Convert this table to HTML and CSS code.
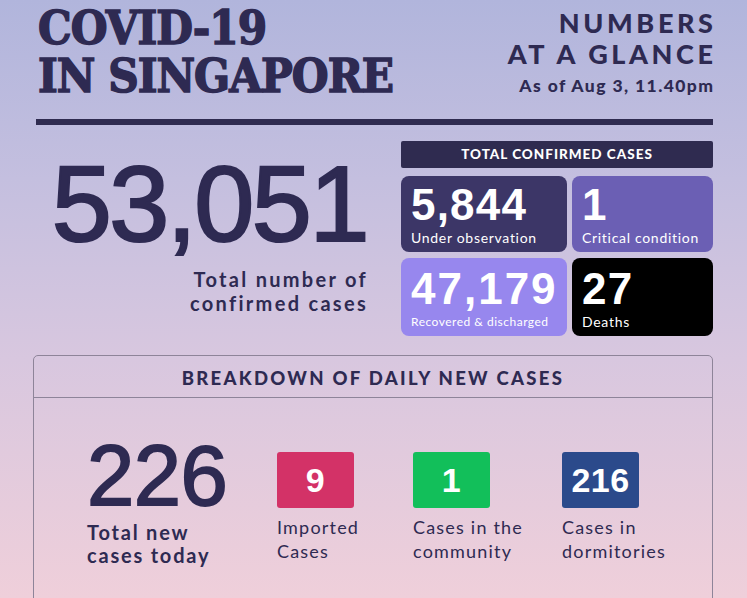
FILE: index.html
```html
<!DOCTYPE html>
<html lang="en">
<head>
<meta charset="utf-8">
<title>COVID-19 in Singapore</title>
<link rel="stylesheet" href="styles.css">
</head>
<body>
<div class="page">
  <header class="top">
    <h1 class="title">COVID-19<br>IN SINGAPORE</h1>
    <div class="glance">
      <div class="glance-title">NUMBERS<br>AT A GLANCE</div>
      <div class="asof">As of Aug 3, 11.40pm</div>
    </div>
  </header>
  <div class="rule"></div>
  <section class="totals">
    <div class="total-left">
      <div class="big">53,051</div>
      <div class="big-cap">Total number of<br>confirmed cases</div>
    </div>
    <div class="panel">
      <div class="panel-head">TOTAL CONFIRMED CASES</div>
      <div class="cards">
        <div class="card c1"><div class="num">5,844</div><div class="lbl">Under observation</div></div>
        <div class="card c2"><div class="num">1</div><div class="lbl">Critical condition</div></div>
        <div class="card c3"><div class="num">47,179</div><div class="lbl small">Recovered &amp; discharged</div></div>
        <div class="card c4"><div class="num">27</div><div class="lbl">Deaths</div></div>
      </div>
    </div>
  </section>
  <section class="breakdown">
    <div class="bd-head">BREAKDOWN OF DAILY NEW CASES</div>
    <div class="bd-body">
      <div class="bd-total">
        <div class="bd-num">226</div>
        <div class="bd-cap">Total new<br>cases today</div>
      </div>
      <div class="bd-item">
        <div class="chip pink">9</div>
        <div class="chip-lbl">Imported<br>Cases</div>
      </div>
      <div class="bd-item">
        <div class="chip green">1</div>
        <div class="chip-lbl">Cases in the<br>community</div>
      </div>
      <div class="bd-item">
        <div class="chip blue">216</div>
        <div class="chip-lbl">Cases in<br>dormitories</div>
      </div>
    </div>
  </section>
</div>
</body>
</html>
```
FILE: styles.css
```css
html, body {
  margin: 0;
  padding: 0;
}
body {
  width: 747px;
  height: 598px;
  overflow: hidden;
  background: linear-gradient(180deg, #b1b5dc 0%, #c4bfdf 30%, #d8c7df 60%, #efcfda 100%);
  color: #2e2a52;
  font-family: Lato, "Noto Sans", sans-serif;
}
.page {
  padding: 0 34px 0 33px;
}
.top {
  display: flex;
  justify-content: space-between;
  align-items: flex-start;
}
.title {
  margin: 0 0 0 5px;
  padding-top: 4px;
  font-family: "DejaVu Serif Condensed", "DejaVu Serif", "Liberation Serif", serif;
  font-stretch: condensed;
  font-weight: 700;
  font-size: 47px;
  line-height: 48px;
  letter-spacing: -1px;
  color: #2e2a52;
  -webkit-text-stroke: 1.4px #2e2a52;
}
.glance {
  text-align: right;
  padding-top: 7px;
}
.glance-title {
  font-weight: 900;
  font-size: 27px;
  line-height: 31px;
  letter-spacing: 3.6px;
  margin-right: -3.6px;
}
.asof {
  margin-top: 7px;
  font-weight: 900;
  font-size: 17.5px;
  line-height: 20px;
  letter-spacing: 1.4px;
  margin-right: -1.4px;
}
.rule {
  height: 6px;
  margin: 19px 0 0 3px;
  background: #2f2b50;
}
.totals {
  display: flex;
  gap: 34px;
  margin-top: 16px;
}
.total-left {
  width: 334px;
  text-align: right;
  padding-top: 9px;
}
.big {
  font-family: "Liberation Sans", Arial, sans-serif;
  font-size: 108px;
  line-height: 108px;
  letter-spacing: -2.5px;
  margin-right: 0;
  color: #2e2a52;
  -webkit-text-stroke: 2.2px #2e2a52;
}
.big-cap {
  margin-top: 9px;
  font-weight: 700;
  font-size: 20px;
  line-height: 24px;
  letter-spacing: 2.3px;
  margin-right: -1px;
}
.panel {
  width: 312px;
}
.panel-head {
  height: 27px;
  line-height: 27px;
  background: #2f2b50;
  border-radius: 2px;
  color: #fff;
  text-align: center;
  font-weight: 900;
  font-size: 13.5px;
  letter-spacing: 1px;
}
.cards {
  display: grid;
  grid-template-columns: 166px 1fr;
  grid-template-rows: 76px 78px;
  gap: 6px 5px;
  margin-top: 8px;
}
.card {
  border-radius: 8px;
  padding: 7px 10px 0;
  color: #fff;
}
.c1 { background: #3c3667; }
.c2 { background: #6b5fb4; }
.c3 { background: #9787ee; padding-top: 9px; }
.c4 { background: #000; padding-top: 9px; }
.num {
  font-family: "Liberation Sans", Arial, sans-serif;
  font-weight: 700;
  font-size: 44px;
  line-height: 44px;
  letter-spacing: 1.2px;
}
.c3 .num {
  letter-spacing: 2px;
}
.lbl {
  margin-top: 3px;
  font-size: 14px;
  line-height: 16px;
  letter-spacing: 0.7px;
}
.lbl.small {
  font-size: 12px;
  letter-spacing: 0.5px;
}
.breakdown {
  margin-top: 19px;
  border: 1px solid #8e8499;
  border-radius: 5px;
  height: 300px;
}
.bd-head {
  height: 41px;
  line-height: 44px;
  border-bottom: 1px solid #8e8499;
  text-align: center;
  font-weight: 900;
  font-size: 18.5px;
  letter-spacing: 2.3px;
}
.bd-body {
  display: grid;
  grid-template-columns: 190px 136px 149px auto;
  padding: 35px 0 0 53px;
  align-items: start;
}
.bd-num {
  font-family: "Liberation Sans", Arial, sans-serif;
  font-size: 85px;
  line-height: 85px;
  letter-spacing: -0.5px;
  color: #2e2a52;
  -webkit-text-stroke: 1.8px #2e2a52;
}
.bd-cap {
  margin-top: 3px;
  font-weight: 700;
  font-size: 20px;
  line-height: 23px;
  letter-spacing: 1.8px;
}
.bd-item {
  padding-top: 19px;
}
.chip {
  width: 77px;
  height: 56px;
  border-radius: 3px;
  color: #fff;
  text-align: center;
  font-family: "Liberation Sans", Arial, sans-serif;
  font-weight: 700;
  font-size: 34px;
  line-height: 56px;
  letter-spacing: 0.5px;
}
.pink { background: #d33267; }
.green { background: #12bf5a; }
.blue { background: #2b4a8b; }
.chip-lbl {
  margin-top: 7px;
  font-size: 18px;
  line-height: 24px;
  letter-spacing: 1.2px;
}
```
